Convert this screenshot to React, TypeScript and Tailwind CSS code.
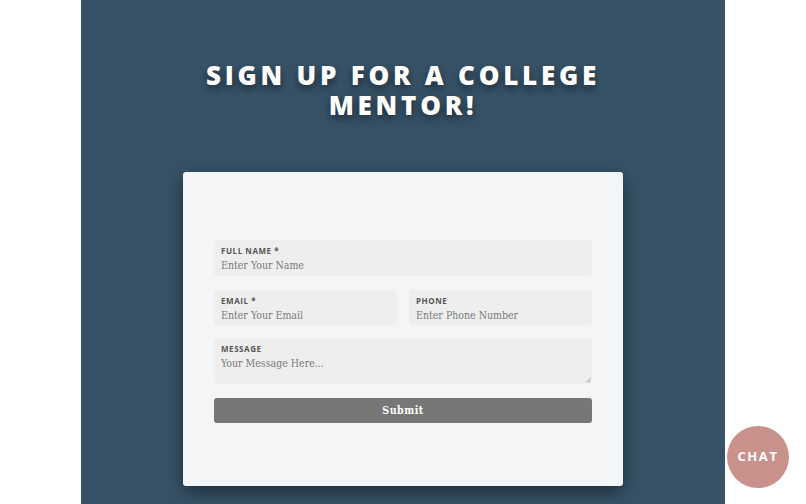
import React from "react";

const label = "block text-[8px] font-bold tracking-[0.07em] uppercase text-[#555] leading-[10px] [font-family:'Open_Sans',sans-serif]";
const input = "block w-full bg-transparent outline-none text-[10.5px] leading-[14px] text-[#777] placeholder:text-[#7a7a7a] [font-family:'DejaVu_Serif_Condensed','DejaVu_Serif',serif] mt-[2px]";

function Field({ name, ph, className = "" }: { name: string; ph: string; className?: string }) {
  return (
    <div className={"rounded-[4px] bg-[#eeeeee] px-[7px] pt-[6px] pb-[5px] " + className}>
      <label className={label}>{name}</label>
      <input className={input} placeholder={ph} />
    </div>
  );
}

export default function App() {
  return (
    <div className="relative w-[806px] h-[504px] overflow-hidden bg-white">
      <div className="ml-[81px] w-[644px] h-full bg-[#375267] pt-[60px]">
        <h1 className="text-center text-white font-extrabold text-[26px] leading-[30px] tracking-[0.145em] uppercase [font-family:'Open_Sans',sans-serif] [text-shadow:0_4px_8px_rgba(0,0,0,0.5)]">
          Sign up for a college
          <br />
          mentor!
        </h1>
        <div className="mx-auto mt-[52px] w-[440px] h-[314px] rounded-[3px] bg-[#f4f5f7] pt-[68px] px-[31px] shadow-[0_6px_18px_rgba(0,0,0,0.45)]">
          <Field name="Full Name *" ph="Enter Your Name" className="h-[36px]" />
          <div className="mt-[14px] flex gap-[12px]">
            <Field name="Email *" ph="Enter Your Email" className="h-[35px] flex-1" />
            <Field name="Phone" ph="Enter Phone Number" className="h-[35px] flex-1" />
          </div>
          <div className="relative mt-[13px] h-[46px] rounded-[4px] bg-[#eeeeee] px-[7px] pt-[6px]">
            <label className={label}>Message</label>
            <textarea
              className={input + " resize-none h-[20px]"}
              placeholder="Your Message Here..."
            />
            <svg className="absolute right-[1px] bottom-[1px]" width="6" height="6" viewBox="0 0 6 6">
              <path d="M5.5 1 L1 5.5 M5.5 3.5 L3.5 5.5" stroke="#888" strokeWidth="0.8" />
            </svg>
          </div>
          <button className="mt-[14px] block w-full h-[25px] rounded-[3px] bg-[#777777] text-white text-[10.5px] font-bold tracking-[0.05em] [font-family:'DejaVu_Serif_Condensed','DejaVu_Serif',serif]">
            Submit
          </button>
        </div>
      </div>
      <div className="absolute left-[727px] top-[426px] w-[62px] h-[62px] rounded-full bg-[#c9918b] flex items-center justify-center">
        <span className="text-white font-bold text-[13px] tracking-[0.12em] [font-family:'Open_Sans',sans-serif]">CHAT</span>
      </div>
    </div>
  );
}
